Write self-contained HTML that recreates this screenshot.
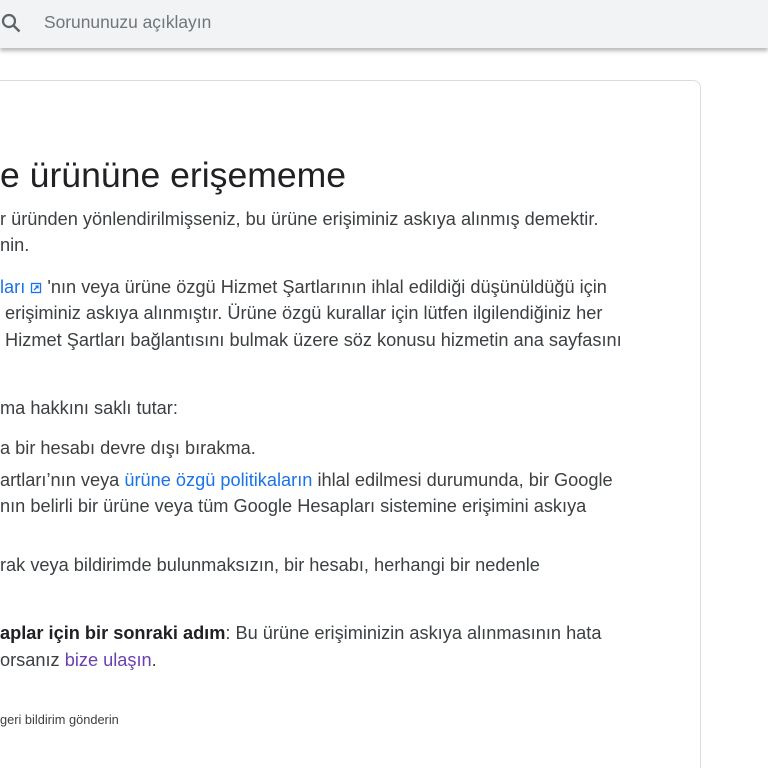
<!DOCTYPE html>
<html style="width:768px;height:768px;overflow:hidden"><head><meta charset="utf-8"><style>
*{margin:0;padding:0;box-sizing:border-box}
body{width:768px;height:768px;overflow:hidden;background:#fff;font-family:"Liberation Sans",Arial,sans-serif;color:#202124;position:relative}
.bar{position:absolute;left:0;top:0;width:768px;height:48px;background:#f1f3f4;box-shadow:0 3px 4px rgba(0,0,0,.28)}
.ph{position:absolute;left:44px;top:12px;font-size:17.4px;color:#70757a}
.card{position:absolute;left:-20px;top:80px;width:721px;height:688px;border:1px solid #dadce0;border-bottom:none;border-radius:8px 8px 0 0}
.l{position:absolute;left:0;white-space:nowrap;font-size:18.2px;line-height:20px;color:#3c4043}
.h{position:absolute;left:0;top:155px;font-size:35.6px;white-space:nowrap;color:#202124}
a{color:#1a73e8;text-decoration:none}
a.v{color:#6a40b0}
b{color:#202124}
</style></head><body>
<div class="bar">
<svg style="position:absolute;left:0;top:11px" width="24" height="24" viewBox="0 0 24 24"><circle cx="9" cy="10" r="6" fill="none" stroke="#5f6368" stroke-width="2.2"/><path d="M13.5 14.5l6 6" stroke="#5f6368" stroke-width="2.4"/></svg>
<div class="ph">Sorununuzu açıklayın</div>
</div>
<div class="card"></div>
<div class="h">e ürününe erişememe</div>
<div class="l" style="top:209px">r üründen yönlendirilmişseniz, bu ürüne erişiminiz askıya alınmış demektir.</div>
<div class="l" style="top:235px">nin.</div>
<div class="l" style="top:277px"><a>ları</a> <svg width="12" height="12" viewBox="0 0 12 12" style="vertical-align:-1px"><rect x="1.5" y="1.5" width="9" height="9" fill="none" stroke="#1a73e8" stroke-width="1.3"/><path d="M4 8l4-4M5.5 4H8v2.5" fill="none" stroke="#1a73e8" stroke-width="1.3"/></svg> 'nın veya ürüne özgü Hizmet Şartlarının ihlal edildiği düşünüldüğü için</div>
<div class="l" style="top:303px">&nbsp;erişiminiz askıya alınmıştır. Ürüne özgü kurallar için lütfen ilgilendiğiniz her</div>
<div class="l" style="top:330px">&nbsp;Hizmet Şartları bağlantısını bulmak üzere söz konusu hizmetin ana sayfasını</div>
<div class="l" style="top:398px">ma hakkını saklı tutar:</div>
<div class="l" style="top:438px">a bir hesabı devre dışı bırakma.</div>
<div class="l" style="top:470px">artları’nın veya <a>ürüne özgü politikaların</a> ihlal edilmesi durumunda, bir Google</div>
<div class="l" style="top:496px">nın belirli bir ürüne veya tüm Google Hesapları sistemine erişimini askıya</div>
<div class="l" style="top:555px">rak veya bildirimde bulunmaksızın, bir hesabı, herhangi bir nedenle</div>
<div class="l" style="top:623px"><b>aplar için bir sonraki adım</b>: Bu ürüne erişiminizin askıya alınmasının hata</div>
<div class="l" style="top:650px">orsanız <a class="v">bize ulaşın</a>.</div>
<div class="l" style="top:710px;font-size:12.8px;color:#3c4043">geri bildirim gönderin</div>
</body></html>
